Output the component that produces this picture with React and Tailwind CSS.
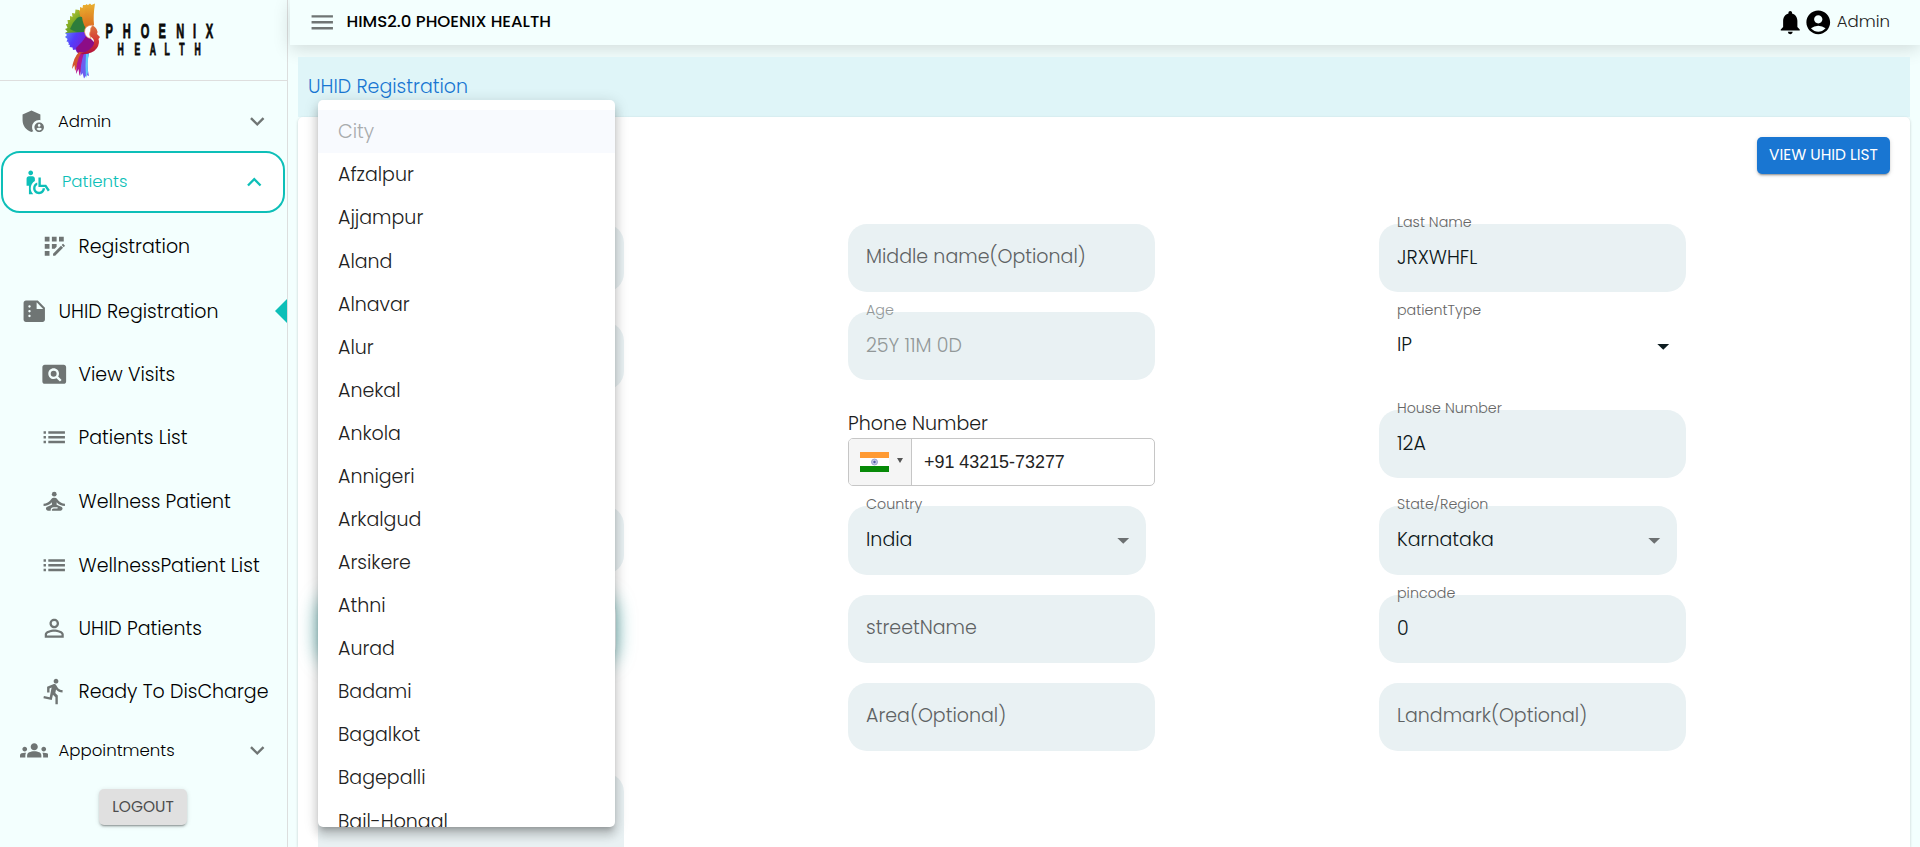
import React from "react";
import {
  MdAdminPanelSettings, MdExpandMore, MdExpandLess, MdWheelchairPickup, MdAppRegistration,
  MdSummarize, MdPageview, MdList, MdSelfImprovement, MdPersonOutline, MdDirectionsRun,
  MdGroups, MdNotifications, MdAccountCircle, MdMenu, MdArrowDropDown,
} from "react-icons/md";

const cities = ["Afzalpur", "Ajjampur", "Aland", "Alnavar", "Alur", "Anekal", "Ankola", "Annigeri", "Arkalgud", "Arsikere", "Athni", "Aurad", "Badami", "Bagalkot", "Bagepalli", "Bail-Hongal"];

const feathers = [
  ["M86 31 Q78 18 78 10 L80 10.5 L80 7 L82.5 8 L83 5 L88 5 Q88 16 91 29 Z", "url(#fOrange)"],
  ["M86 30 Q83 14 86 4 L88 5 L90 3.5 L91.5 5 L95 3.5 Q93 16 94 25 L88 30 Z", "url(#fOrange)"],
  ["M84 31 Q74 22 70 17 L72.5 17 L72 13 L75 13.5 L75.5 9.5 L79 10 Q80 20 87 31 Z", "url(#fLime)"],
  ["M84 32 Q72 28 66 25 L68 23.5 L67.5 20 L70 20 L70 16 L73 17 Q78 24 86 31 Z", "url(#fLime)"],
  ["M84 33 Q72 34 65 33 L67.5 31.5 L65 29 L67.5 28 L66 24 L69 24 Q77 29 86 31 Z", "url(#fLime)"],
  ["M85 32.5 Q76 33 70 29 Q72 23 77 18 Q80 16 82 17 Q83 26 88 31 Z", "#2f7d3a"],
  ["M85 32 L65 33 L67 35 L65 37 L67.5 39 L66.5 41.5 L69 42 L68.5 45 Q79 44 86 36 Z", "url(#fBlue)"],
  ["M86 34 Q76 42 68 42 L70 45 L69.5 47 L72.5 47.5 L73 50 L75.5 49.5 L77 52.5 Q85 48 88 38 Z", "url(#fBlue)"],
  ["M87 35 Q82 43 76 48 L77 52 L79 54.5 Q90 54 96 44 Q90 38 87 35 Z", "#8c0a86"],
  ["M79 52 Q73 58 72 69 L74.5 65 L75 71 L77 67 Q79 58 86 53 Z", "#d3552f"],
  ["M81 53 Q76 62 76 74 L78.5 69 L79.5 76 L82 68 Q83 59 87 53 Z", "#b3138f"],
  ["M84 53 Q80 65 80.5 76 L82.5 73 L84 78.5 L86.5 75 L89 76 Q86 64 89 53 Z", "#6a5ff0"],
  ["M86 54 Q85 66 86 78 L88 72 Q87 62 89 54 Z", "#5ecbf5"],
  ["M92 25 Q99 29 97 34 L100 37 L98.5 39 Q100 43 97 48 Q92 55 80 54 Q91 51 94 44 Q95 38 89 36 Q86 31 92 25 Z", "url(#fBody)"],
];

function Logo() {
  return (
    <svg className="ml-[60px] h-[80px] w-[160px] shrink-0" viewBox="60 0 160 80">
      <defs>
        <linearGradient id="fOrange" x1="0" y1="0" x2="0" y2="1"><stop offset="0" stopColor="#e9b030" /><stop offset="1" stopColor="#d9651b" /></linearGradient>
        <linearGradient id="fLime" gradientUnits="userSpaceOnUse" x1="67" y1="12" x2="86" y2="33"><stop offset="0" stopColor="#c3c83a" /><stop offset=".45" stopColor="#76a824" /><stop offset="1" stopColor="#2f7d3a" /></linearGradient>
        <linearGradient id="fBlue" gradientUnits="userSpaceOnUse" x1="65" y1="35" x2="86" y2="46"><stop offset="0" stopColor="#5f7cfa" /><stop offset=".4" stopColor="#543cfb" /><stop offset="1" stopColor="#7a1fd0" /></linearGradient>
        <linearGradient id="fBody" x1="0" y1="0" x2="0" y2="1"><stop offset="0" stopColor="#d9793f" /><stop offset=".5" stopColor="#d63b35" /><stop offset="1" stopColor="#b00f3c" /></linearGradient>
        <filter id="soft"><feGaussianBlur stdDeviation=".45" /></filter>
      </defs>
      <g filter="url(#soft)">
        {feathers.map(([d, fill]) => <path key={d} d={d} fill={fill} />)}
        <path d="M93 25 Q84.5 25 84.5 32 Q85.5 38 91 38.5 Q88.5 34 90.5 31 Q90 28 93 25 Z" fill="#fff" stroke="#e8854a" strokeWidth=".7" />
      </g>
      <g transform="scale(.54 1)" fontFamily="Liberation Sans" fontWeight="700" fill="#0a0a0a" stroke="#0a0a0a" strokeWidth=".8">
        <text x="195.4 227.5 260.5 293.5 326.5 357.5 381" y="38.4" fontSize="20.5">PHOENIX</text>
        <text x="217.5 249 277.5 304.5 332 360" y="55" fontSize="16">HEALTH</text>
      </g>
    </svg>
  );
}

function NavItem({ icon: Icon, label, className = "", small, chevron }) {
  return (
    <div className={"flex shrink-0 items-center " + className}>
      <Icon className="size-[28.5px] text-[#6f7574]" />
      <span className={(small ? "text-[16.6px]" : "text-[19px]") + " ml-[10.5px] whitespace-nowrap pt-[2px]"}>{label}</span>
      {chevron && <MdExpandMore className="ml-auto mr-4 size-[28.5px] text-[#6f7574]" />}
    </div>
  );
}

function Sidebar() {
  return (
    <aside className="flex w-[288px] shrink-0 flex-col border-r border-[#dcdede] text-black">
      <div className="h-[81px] shrink-0 border-b border-[#dedede]"><Logo /></div>
      <NavItem icon={MdAdminPanelSettings} label="Admin" small chevron className="mt-[9px] h-[62px] pl-[19px]" />
      <div className="-mt-px ml-px mr-[2px] flex h-[62px] shrink-0 items-center rounded-[19px] border-2 border-[#0dbfb8] bg-white pl-[20px] pr-[15px] text-[#0dbfb8]">
        <MdWheelchairPickup className="size-[28.5px]" />
        <span className="ml-[10.5px] text-[16.6px]">Patients</span>
        <MdExpandLess className="ml-auto size-[28.5px]" />
      </div>
      <NavItem icon={MdAppRegistration} label="Registration" className="mt-px h-[65px] pl-[39.5px]" />
      <div className="flex h-[64px] shrink-0 items-center">
        <NavItem icon={MdSummarize} label="UHID Registration" className="pl-[19.5px]" />
        <svg className="ml-auto h-6 w-3" viewBox="0 0 12 24"><path d="M12 0 0 12l12 12Z" fill="#0dbfb8" /></svg>
      </div>
      <NavItem icon={MdPageview} label="View Visits" className="h-[63px] pl-[39.5px]" />
      <NavItem icon={MdList} label="Patients List" className="h-[63px] pl-[39.5px]" />
      <NavItem icon={MdSelfImprovement} label="Wellness Patient" className="h-[65px] pl-[39.5px]" />
      <NavItem icon={MdList} label="WellnessPatient List" className="h-[62px] pl-[39.5px]" />
      <NavItem icon={MdPersonOutline} label="UHID Patients" className="h-[64px] pl-[39.5px]" />
      <NavItem icon={MdDirectionsRun} label="Ready To DisCharge" className="h-[62px] pl-[39.5px]" />
      <NavItem icon={MdGroups} label="Appointments" small chevron className="h-[56px] pl-[19.5px]" />
      <button className="ml-[99px] mt-[11px] flex h-[36px] w-[88px] shrink-0 items-center justify-center rounded-[5px] bg-[#e0e0e0] text-[15.4px] font-normal text-[#4d4d4d] shadow-[0_3px_1px_-2px_rgba(0,0,0,0.2),0_2px_2px_0_rgba(0,0,0,0.14),0_1px_5px_0_rgba(0,0,0,0.12)]">LOGOUT</button>
    </aside>
  );
}

function Field({ label, value, placeholder, select, disabled, plain, className = "" }) {
  return (
    <div className={"relative flex shrink-0 items-center rounded-[19px] pl-[18px] pr-[8.5px] " + (plain ? "" : "bg-[#e9f1f3] ") + (select && !plain ? "h-[69px] w-[298px] " : "h-[68px] w-[307px] ") + className}>
      {label && <span className={"absolute left-[18px] top-[-12px] whitespace-nowrap text-[14.25px] leading-[21px] " + (disabled ? "text-[#929898]" : "text-[#666]")}>{label}</span>}
      {placeholder && <span className="mb-px text-[19px] text-[#5e6263]">{placeholder}</span>}
      {value && <span className={"text-[19px] " + (plain ? "mb-[2px] " : "") + (disabled ? "text-[#929898]" : "text-[#0d1719]")}>{value}</span>}
      {select && <MdArrowDropDown className={"ml-auto size-[28.5px] " + (plain ? "text-[#0d1c20]" : "text-[#6c7071]")} />}
    </div>
  );
}

function PhoneInput() {
  return (
    <div className="mt-[29px] w-[307px] shrink-0">
      <div className="h-[29px] text-[19px] leading-[29px] text-[#1c1c1c]">Phone Number</div>
      <div className="flex h-[48px] overflow-hidden rounded-[5px] border border-[#c6c6c6] bg-white">
        <div className="flex w-[63px] items-center gap-[8px] border-r border-[#c6c6c6] bg-[#f5f5f5] pl-[11px]">
          <svg className="h-5 w-[29px]" viewBox="0 0 29 20">
            <path fill="#fff" d="M0 0h29v20H0z" /><path fill="#ff9a33" d="M0 0h29v6H0z" /><path fill="#078a08" d="M0 14h29v6H0z" />
            <circle cx="14.5" cy="10" r="3" fill="#c5c9e6" stroke="#8f97cc" strokeWidth=".8" /><circle cx="14.5" cy="10" r="1.2" fill="#5058a8" />
          </svg>
          <svg className="mb-[3px] h-[5px] w-[6px]" viewBox="0 0 6 5"><path d="M0 0h6L3 5Z" fill="#555" /></svg>
        </div>
        <span className="flex items-center pl-[12px] font-['Liberation_Sans',Arial,sans-serif] text-[17.9px] font-normal text-[#222]">+91 43215-73277</span>
      </div>
    </div>
  );
}

function CityMenu() {
  return (
    <div className="absolute left-[318px] top-[100px] h-[727px] w-[297px] overflow-hidden rounded-[5px] bg-white py-[10px] text-[19px] text-[#212121] shadow-[0_5px_5px_-3px_rgba(0,0,0,0.2),0_8px_10px_1px_rgba(0,0,0,0.14),0_3px_14px_2px_rgba(0,0,0,0.12)]">
      <div className="flex h-[43.08px] items-center bg-[#f8fafe] pl-[20px] pt-[2px] text-[#a9abad]">City</div>
      {cities.map((c) => <div key={c} className="flex h-[43.08px] items-center pl-[20px] pt-[2px]">{c}</div>)}
    </div>
  );
}

export default function App() {
  return (
    <div className="relative flex h-[847px] w-[1920px] overflow-hidden bg-[#f3fffe] font-['Poppins',sans-serif] font-light">
      <Sidebar />
      <main className="flex min-w-0 flex-1 flex-col">
        <header className="ml-[2px] flex h-[45px] shrink-0 items-center bg-[#f3fffe] pl-[18px] pr-[30px] shadow-[0_4px_18px_rgba(0,0,0,0.14)]">
          <MdMenu className="size-[28.5px] text-[#6f7574]" />
          <span className="ml-[10px] text-[16.6px] font-medium text-black">HIMS2.0 PHOENIX HEALTH</span>
          <MdNotifications className="ml-auto size-[28.5px] text-black" />
          <MdAccountCircle className="size-[28.5px] text-black" />
          <span className="ml-[4px] text-[16.6px] text-[#222]">Admin</span>
        </header>
        <div className="relative mx-[10px] mt-[12px] flex h-[60px] shrink-0 items-center bg-[#dff5f8] pl-[10px] text-[19px] text-[#1976d2]">UHID Registration</div>
        <section className="relative mx-[10px] flex flex-1 flex-col rounded-t-[5px] bg-white shadow-[0_1px_3px_rgba(0,0,0,0.2)]">
          <button className="ml-auto mr-[20px] mt-[20px] flex h-[37px] w-[133px] shrink-0 items-center justify-center rounded-[5px] bg-[#1976d2] pb-px text-[15.4px] font-normal text-white shadow-[0_3px_1px_-2px_rgba(0,0,0,0.2),0_2px_2px_0_rgba(0,0,0,0.14),0_1px_5px_0_rgba(0,0,0,0.12)]">VIEW UHID LIST</button>
          <div className="mt-[50px] flex h-[620px] pl-[20px]">
            <div className="mr-[224px] flex w-[306px] flex-col">
              <Field className="max-w-[306px]" />
              <Field className="mt-[30px] max-w-[306px]" />
              <Field className="mt-[116px] max-w-[306px]" />
              <Field select className="mt-[21px] shadow-[0_0_19px_rgba(15,143,143,0.6)]" />
              <div className="mt-[109px] h-[80px] w-[306px] shrink-0 rounded-t-[19px] bg-[#e9f1f3]" />
            </div>
            <div className="mr-[224px] flex w-[307px] flex-col">
              <Field placeholder="Middle name(Optional)" />
              <Field label="Age" value="25Y 11M 0D" disabled className="mt-[20px]" />
              <PhoneInput />
              <Field label="Country" value="India" select className="mt-[20px]" />
              <Field placeholder="streetName" className="mt-[20px]" />
              <Field placeholder="Area(Optional)" className="mt-[20px]" />
            </div>
            <div className="flex w-[307px] flex-col">
              <Field label="Last Name" value="JRXWHFL" />
              <Field label="patientType" value="IP" select plain className="mt-[20px]" />
              <Field label="House Number" value="12A" className="mt-[30px]" />
              <Field label="State/Region" value="Karnataka" select className="mt-[28px]" />
              <Field label="pincode" value="0" className="mt-[20px]" />
              <Field placeholder="Landmark(Optional)" className="mt-[20px]" />
            </div>
          </div>
        </section>
      </main>
      <CityMenu />
    </div>
  );
}
